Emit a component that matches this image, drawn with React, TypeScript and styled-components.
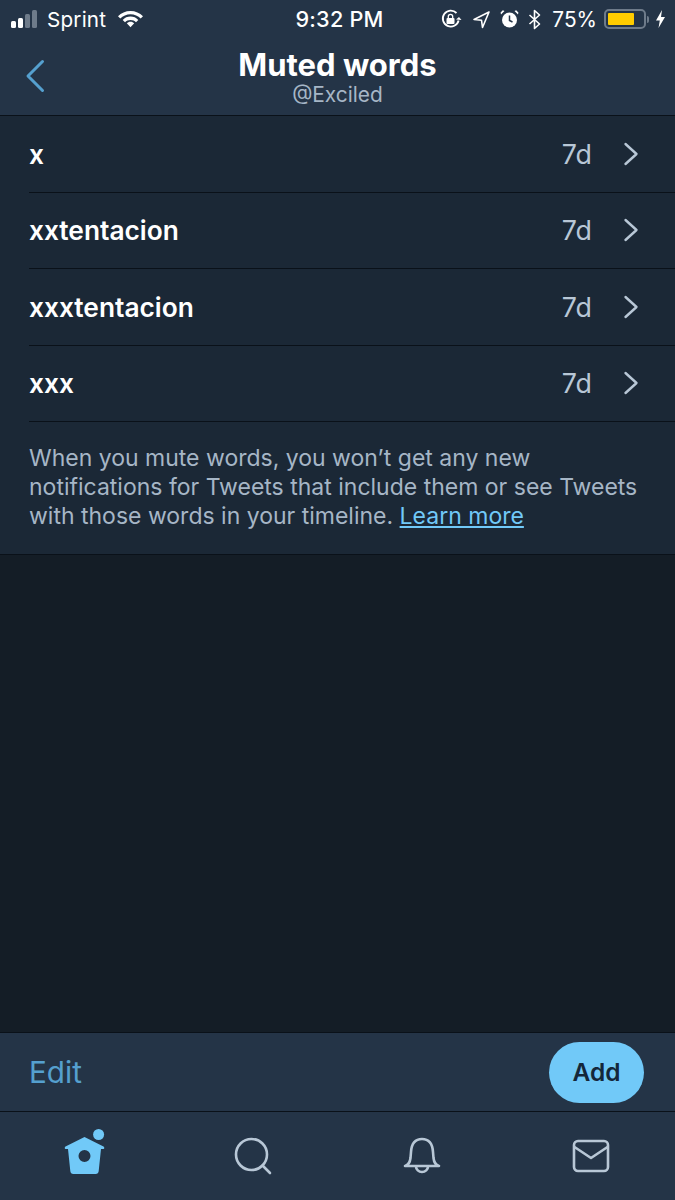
import React from "react";
import styled, { createGlobalStyle } from "styled-components";

const words = ["x", "xxtentacion", "xxxtentacion", "xxx"];

const GlobalStyle = createGlobalStyle`
  html, body {
    margin: 0;
    padding: 0;
    background: #141d26;
  }
  body {
    font-family: "Inter", "Liberation Sans", sans-serif;
    -webkit-font-smoothing: antialiased;
  }
`;

const App: React.FC = () => {
  return (
    <Screen>
      <GlobalStyle />
      <Header>
        <StatusBar>
          <StatusLeft>
            <Signal>
              <Bar $h={7} $on />
              <Bar $h={10} $on />
              <Bar $h={14} />
              <Bar $h={18} />
            </Signal>
            <Carrier>Sprint</Carrier>
            <svg width="27" height="20" viewBox="0 0 27 20" fill="#fff">
              <path d="M13.5 2C8.6 2 4.2 4 1 7.2l2.3 2.4C5.9 7 9.5 5.3 13.5 5.3s7.6 1.7 10.2 4.3L26 7.2C22.8 4 18.4 2 13.5 2z" />
              <path d="M13.5 7.6c-3 0-5.8 1.2-7.8 3.3L8 13.2c1.4-1.4 3.3-2.3 5.5-2.3s4.1.9 5.5 2.3l2.3-2.3c-2-2.1-4.8-3.3-7.8-3.3z" />
              <path d="M13.5 12.8c-1.5 0-2.8.6-3.7 1.5l3.7 3.9 3.7-3.9c-.9-.9-2.2-1.5-3.7-1.5z" />
            </svg>
          </StatusLeft>
          <Clock>9:32 PM</Clock>
          <StatusRight>
            <svg width="22" height="20" viewBox="0 0 22 20" fill="none">
              <path d="M18.6 11.5A8 8 0 1 1 16.5 4" stroke="#fff" strokeWidth="1.8" />
              <path d="M16 10.5l3-2.5 2.5 3z" fill="#fff" />
              <rect x="6.5" y="9" width="8" height="6" rx="1" fill="#fff" />
              <path d="M8.3 9V7.5a2.2 2.2 0 0 1 4.4 0V9" stroke="#fff" strokeWidth="1.3" />
            </svg>
            <svg width="19" height="19" viewBox="0 0 19 19" fill="none">
              <path d="M17 2L2 9.5l7.5.7L10.5 17.5z" stroke="#fff" strokeWidth="1.6" strokeLinejoin="round" />
            </svg>
            <svg width="19" height="20" viewBox="0 0 19 20" fill="#fff">
              <circle cx="9.5" cy="11" r="7.5" />
              <path d="M9.5 6.5V11.5L12.5 13" stroke="#243447" strokeWidth="1.5" fill="none" />
              <path d="M1 5.5L4.5 2 2.8 1.2 .6 3.4zM18 5.5L14.5 2l1.7-.8 2.2 2.2z" />
            </svg>
            <svg width="13" height="21" viewBox="0 0 13 21" fill="none">
              <path d="M1.5 6l10 9-5 4.500V1.500l5 4.500-10 9" stroke="#fff" strokeWidth="1.6" strokeLinejoin="round" />
            </svg>
            <Percent>75%</Percent>
            <Battery>
              <BatteryFill />
            </Battery>
            <BatteryCap />
            <svg width="11" height="20" viewBox="0 0 11 20" fill="#fff">
              <path d="M7 1L1 11.5h3.8L3.5 19 10 8H6z" />
            </svg>
          </StatusRight>
        </StatusBar>
        <NavBar>
          <BackButton>
            <svg width="20" height="34" viewBox="0 0 20 34" fill="none">
              <path d="M17.5 2.5L3 17l14.5 14.5" stroke="#55a0cf" strokeWidth="3" strokeLinecap="round" strokeLinejoin="round" />
            </svg>
          </BackButton>
          <TitleBlock>
            <Title>Muted words</Title>
            <Handle>@Exciled</Handle>
          </TitleBlock>
        </NavBar>
      </Header>

      <List>
        {words.map((word) => (
          <Row key={word}>
            <RowInner>
              <Word>{word}</Word>
              <Duration>7d</Duration>
              <svg width="16" height="24" viewBox="0 0 16 24" fill="none">
                <path d="M2.5 2l11 10-11 10" stroke="#b8c7d6" strokeWidth="2.4" strokeLinecap="round" strokeLinejoin="round" />
              </svg>
            </RowInner>
          </Row>
        ))}
        <Note>
          When you mute words, you won’t get any new notifications for Tweets
          that include them or see Tweets with those words in your timeline.{" "}
          <NoteLink>Learn more</NoteLink>
        </Note>
      </List>

      <Empty />

      <Toolbar>
        <EditLabel>Edit</EditLabel>
        <AddButton>Add</AddButton>
      </Toolbar>

      <TabBar>
        <Tab>
          <svg width="42" height="54" viewBox="0 0 42 54" fill="#71c9f8">
            <circle cx="35.6" cy="5.5" r="5.5" />
            <path
              fillRule="evenodd"
              d="M21.5 8L2.5 17.5c-1 .5-1 2.5 0 2.5H5L7.3 42c.2 2 1.2 3 3 3h22.4c1.800 0 2.800-1 3-3L38 20h2.500c1 0 1-2 0-2.500zM21.500 21a6 6 0 1 0 0 12 6 6 0 0 0 0-12z"
            />
          </svg>
        </Tab>
        <Tab>
          <svg width="38" height="38" viewBox="0 0 38 38" fill="none">
            <circle cx="17.5" cy="17.5" r="15.5" stroke="#b8c7d6" strokeWidth="2.6" />
            <path d="M28.5 28.5l7.5 7.5" stroke="#b8c7d6" strokeWidth="2.6" strokeLinecap="round" />
          </svg>
        </Tab>
        <Tab>
          <svg width="38" height="38" viewBox="0 0 38 38" fill="none">
            <path
              d="M2 29c3.500-1 5-3.500 5.500-8l.5-6C8.500 7 12 2 19 2s10.500 5 11 13l.5 6c.5 4.500 2 7 5.500 8z"
              stroke="#b8c7d6"
              strokeWidth="2.6"
              strokeLinejoin="round"
            />
            <path d="M13 29.500a6 5.500 0 0 0 12 0" stroke="#b8c7d6" strokeWidth="2.6" />
          </svg>
        </Tab>
        <Tab>
          <svg width="38" height="34" viewBox="0 0 38 34" fill="none">
            <rect x="2" y="2" width="34" height="30" rx="4" stroke="#b8c7d6" strokeWidth="2.6" />
            <path d="M2.5 8L19 19 35.5 8" stroke="#b8c7d6" strokeWidth="2.6" strokeLinejoin="round" />
          </svg>
        </Tab>
      </TabBar>
    </Screen>
  );
};

export default App;

const Screen = styled.div`
  width: 675px;
  height: 1200px;
  display: flex;
  flex-direction: column;
  overflow: hidden;
  background: #141d26;
`;

const Header = styled.header`
  height: 115px;
  background: #243447;
  border-bottom: 1px solid #0a1119;
  flex-shrink: 0;
`;

const StatusBar = styled.div`
  height: 38px;
  padding: 0 9px 0 10px;
  display: grid;
  grid-template-columns: 1fr auto 1fr;
  align-items: center;
  color: #fff;
`;

const StatusLeft = styled.div`
  display: flex;
  align-items: center;
  gap: 11px;
`;

const Signal = styled.div`
  display: flex;
  align-items: flex-end;
  gap: 2px;
  margin-left: 1px;
`;

const Bar = styled.span<{ $h: number; $on?: boolean }>`
  width: 5px;
  height: ${(p) => p.$h}px;
  border-radius: 1.5px;
  background: ${(p) => (p.$on ? "#fff" : "#6e7b8a")};
`;

const Carrier = styled.span`
  font-size: 20.7px;
  letter-spacing: 0.2px;
  margin-left: -1px;
`;

const Clock = styled.span`
  font-size: 21.7px;
  font-weight: 500;
  letter-spacing: 0.2px;
  padding-left: 3px;
`;

const StatusRight = styled.div`
  display: flex;
  align-items: center;
  justify-content: flex-end;
  gap: 9px;

  svg:first-child {
    margin-right: 1px;
  }
`;

const Percent = styled.span`
  font-size: 20.8px;
  margin-left: 2px;
  margin-right: -2px;
`;

const Battery = styled.div`
  width: 42px;
  height: 20px;
  box-sizing: border-box;
  border: 2px solid #6e7b8a;
  border-radius: 5px;
  padding: 2px;
`;

const BatteryFill = styled.div`
  width: 75%;
  height: 100%;
  background: #ffcc00;
  border-radius: 1px;
`;

const BatteryCap = styled.span`
  width: 2px;
  height: 7px;
  background: #6e7b8a;
  border-radius: 0 2px 2px 0;
  margin-left: -8px;
  margin-right: -3px;
`;

const NavBar = styled.div`
  height: 77px;
  position: relative;
  display: flex;
  justify-content: center;
`;

const BackButton = styled.div`
  position: absolute;
  left: 25px;
  top: 21px;
  line-height: 0;
`;

const TitleBlock = styled.div`
  display: flex;
  flex-direction: column;
  align-items: center;
  padding-top: 9px;
`;

const Title = styled.div`
  font-size: 31px;
  font-weight: 700;
  line-height: 36px;
  color: #fff;
`;

const Handle = styled.div`
  font-size: 20.9px;
  line-height: 24px;
  color: #a6b6c6;
`;

const List = styled.section`
  background: #1b2836;
  border-bottom: 1px solid #0a1119;
  flex-shrink: 0;
`;

const Row = styled.div`
  height: 76.5px;
  padding-left: 29px;
  box-sizing: border-box;
`;

const RowInner = styled.div`
  height: 100%;
  box-sizing: border-box;
  padding-right: 36px;
  display: flex;
  align-items: center;
  border-bottom: 1px solid #0a1119;
`;

const Word = styled.span`
  flex: 1;
  font-size: 26.3px;
  font-weight: 600;
  color: #fff;
  padding-top: 1px;
`;

const Duration = styled.span`
  font-size: 26.8px;
  color: #b8c7d6;
  margin-right: 31px;
`;

const Note = styled.p`
  margin: 0;
  padding: 22px 20px 23px 29px;
  font-size: 23px;
  line-height: 29px;
  color: #a6b6c6;
`;

const NoteLink = styled.span`
  color: #71c9f8;
  text-decoration: underline;
`;

const Empty = styled.div`
  flex: 1;
`;

const Toolbar = styled.div`
  height: 78px;
  flex-shrink: 0;
  padding: 0 31px 0 29px;
  display: flex;
  align-items: center;
  justify-content: space-between;
  background: #243447;
  border-top: 1px solid #0a1119;
`;

const EditLabel = styled.span`
  font-size: 29.7px;
  color: #55a0cf;
`;

const AddButton = styled.button`
  width: 95px;
  height: 61px;
  border: none;
  border-radius: 31px;
  background: #71c9f8;
  color: #14273a;
  font-family: inherit;
  font-size: 24.5px;
  font-weight: 600;
  padding: 0;
`;

const TabBar = styled.nav`
  height: 88px;
  flex-shrink: 0;
  display: grid;
  grid-template-columns: repeat(4, 1fr);
  align-items: center;
  justify-items: center;
  background: #243447;
  border-top: 1px solid #0a1119;
`;

const Tab = styled.div`
  line-height: 0;
`;
